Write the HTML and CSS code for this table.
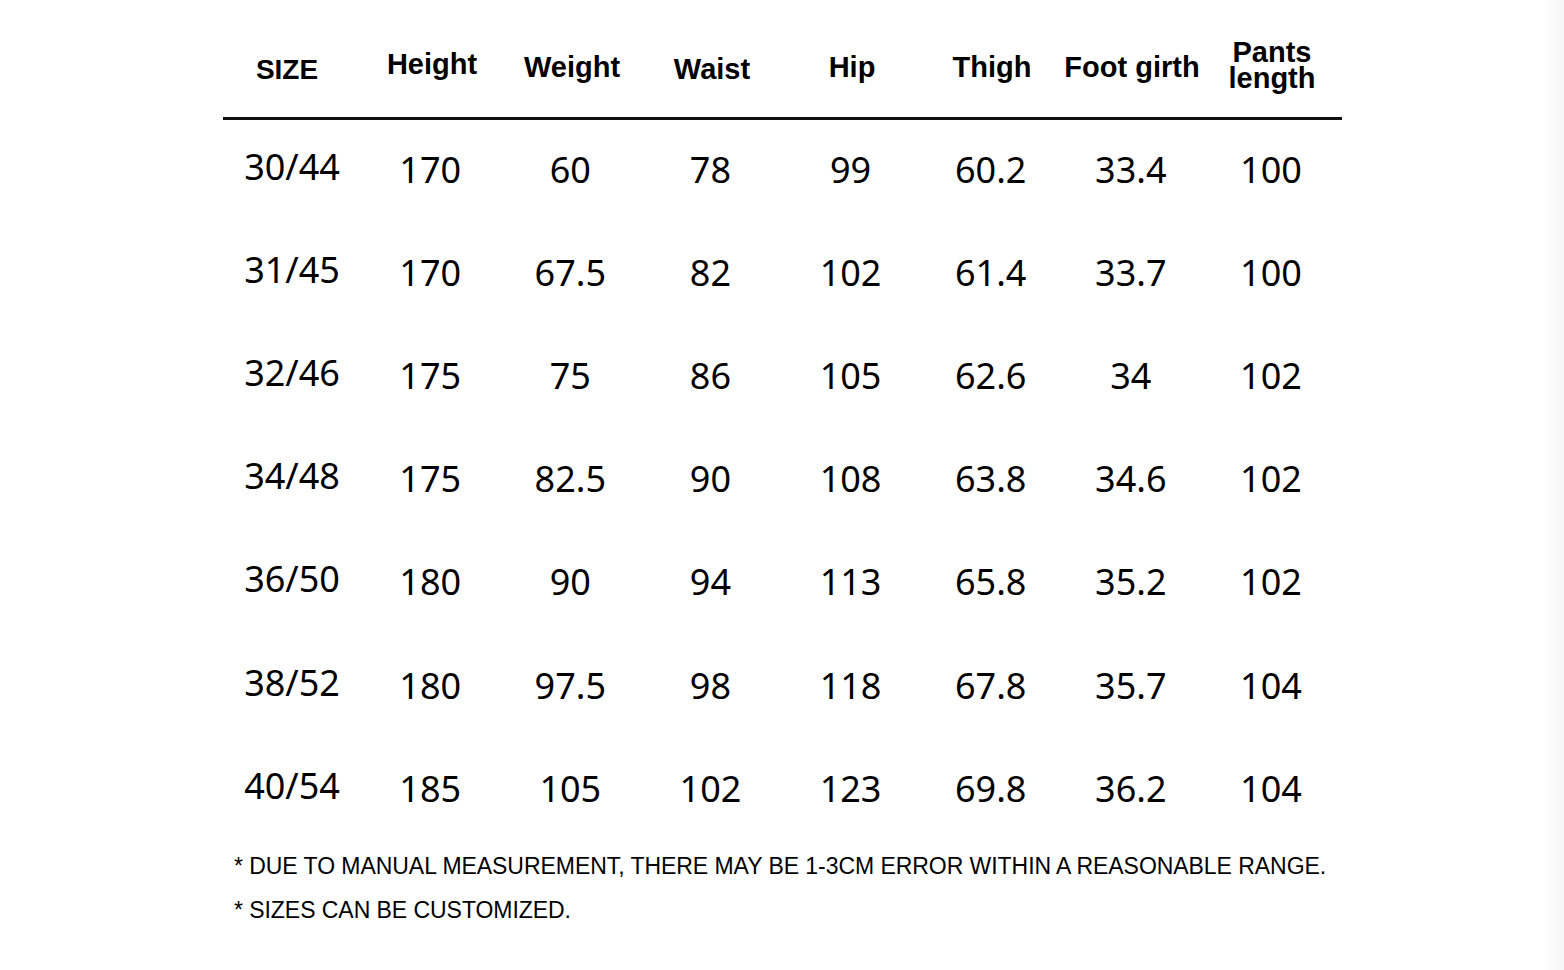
FILE: index.html
```html
<!DOCTYPE html>
<html>
<head>
<meta charset="utf-8">
<link rel="stylesheet" href="styles.css">
</head>
<body>
<div class="page">
  <div class="chart">
    <div class="head">
      <div class="hc hc-size">SIZE</div>
      <div class="hc hc-up">Height</div>
      <div class="hc">Weight</div>
      <div class="hc hc-down">Waist</div>
      <div class="hc">Hip</div>
      <div class="hc">Thigh</div>
      <div class="hc">Foot girth</div>
      <div class="hc hc-two">Pants<br>length</div>
    </div>
    <div class="rule"></div>
    <div class="body">
      <div class="row"><div class="c c-size">30/44</div><div class="c">170</div><div class="c">60</div><div class="c">78</div><div class="c">99</div><div class="c">60.2</div><div class="c">33.4</div><div class="c">100</div></div>
      <div class="row"><div class="c c-size">31/45</div><div class="c">170</div><div class="c">67.5</div><div class="c">82</div><div class="c">102</div><div class="c">61.4</div><div class="c">33.7</div><div class="c">100</div></div>
      <div class="row"><div class="c c-size">32/46</div><div class="c">175</div><div class="c">75</div><div class="c">86</div><div class="c">105</div><div class="c">62.6</div><div class="c">34</div><div class="c">102</div></div>
      <div class="row"><div class="c c-size">34/48</div><div class="c">175</div><div class="c">82.5</div><div class="c">90</div><div class="c">108</div><div class="c">63.8</div><div class="c">34.6</div><div class="c">102</div></div>
      <div class="row"><div class="c c-size">36/50</div><div class="c">180</div><div class="c">90</div><div class="c">94</div><div class="c">113</div><div class="c">65.8</div><div class="c">35.2</div><div class="c">102</div></div>
      <div class="row"><div class="c c-size">38/52</div><div class="c">180</div><div class="c">97.5</div><div class="c">98</div><div class="c">118</div><div class="c">67.8</div><div class="c">35.7</div><div class="c">104</div></div>
      <div class="row"><div class="c c-size">40/54</div><div class="c">185</div><div class="c">105</div><div class="c">102</div><div class="c">123</div><div class="c">69.8</div><div class="c">36.2</div><div class="c">104</div></div>
    </div>
    <div class="notes">
      <p class="note">* DUE TO MANUAL MEASUREMENT, THERE MAY BE 1-3CM ERROR WITHIN A REASONABLE RANGE.</p>
      <p class="note">* SIZES CAN BE CUSTOMIZED.</p>
    </div>
  </div>
  <div class="edge"></div>
</div>
</body>
</html>
```
FILE: styles.css
```css
html, body {
  margin: 0;
  padding: 0;
  background: #ffffff;
}
.page {
  display: flex;
  width: 1564px;
  height: 970px;
  overflow: hidden;
  background: #ffffff;
}
.chart {
  width: 1122px;
  margin-left: 222px;
  color: #000;
}
.edge {
  margin-left: auto;
  width: 22px;
  background: linear-gradient(to right, #ffffff, #f6f6f6);
}
.head {
  display: grid;
  grid-template-columns: repeat(8, 140px);
  height: 117px;
  align-items: center;
  font-family: "Liberation Sans", Arial, sans-serif;
  font-weight: bold;
  font-size: 29px;
}
.hc {
  text-align: center;
  line-height: 30px;
  padding-top: 16px;
}
.hc-size {
  padding-top: 22px;
  font-size: 28px;
  padding-right: 10px;
}
.hc-up { padding-top: 10px; }
.hc-down { padding-top: 20px; }
.hc-two {
  line-height: 26px;
  padding-top: 12px;
}
.rule {
  height: 3px;
  width: 1119px;
  margin-left: 1px;
  background: #111;
}
.body {
  padding-right: 3px;
  margin-left: -2px;
}
.row {
  display: grid;
  grid-template-columns: repeat(8, 1fr);
  height: 103.2px;
  align-items: center;
  font-family: "Noto Sans", "Open Sans", sans-serif;
  font-size: 36px;
}
.c {
  text-align: center;
  line-height: 40px;
  padding-bottom: 4px;
}
.c-size {
  padding-bottom: 10px;
  padding-left: 4px;
}
.notes {
  padding-left: 12px;
  padding-top: 2px;
}
.note {
  margin: 0;
  font-family: "Liberation Sans", Arial, sans-serif;
  font-size: 23px;
  line-height: 44px;
  letter-spacing: -0.05px;
}
```
